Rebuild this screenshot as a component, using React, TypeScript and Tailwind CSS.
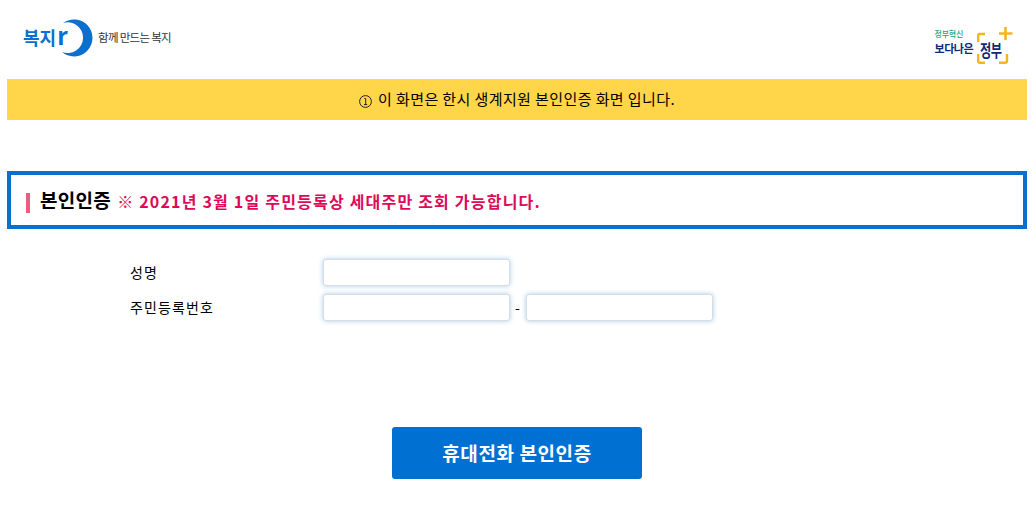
const krFont = "font-['Noto_Sans_CJK_KR',sans-serif]";

function Logo() {
	return (
		<div className="flex items-center h-[79px] pl-[23px] pb-[3px]">
			<div className="relative w-[71px] h-[38px]">
				<span className="absolute left-0 top-[3px] text-[18px] leading-[30px] font-bold text-[#0b6fd0] whitespace-nowrap">
					복지<span className="text-[24px] leading-[24px] ml-[1px]">r</span>
				</span>
				<svg className="absolute left-[33px] top-0" width="38" height="38" viewBox="0 0 38 38">
					<path d="M7 4 A18.5 18.5 0 1 1 6 33 A15.4 15.4 0 1 0 7 4 Z" fill="#0b6fd0" />
				</svg>
			</div>
			<span className="ml-[4px] text-[11.5px] tracking-[-0.7px] text-[#333]">
				함께 만드는 복지
			</span>
		</div>
	);
}

function GovLogo() {
	return (
		<div className="flex items-end h-[79px] pr-[20px] pb-[15px]">
			<div className="flex flex-col items-start mr-[4px] mb-[9px]">
				<span className="text-[8px] leading-[14px] font-medium tracking-[-0.2px] text-[#1fa37a]">
					정부혁신
				</span>
				<span className="text-[11px] leading-[14px] font-bold tracking-[-0.5px] text-[#0f2a78]">
					보다나은
				</span>
			</div>
			<div className="relative w-[37px] h-[37px]">
				<span className="absolute left-[-1px] top-[11px] text-[17px] leading-[24px] font-bold tracking-[-1px] text-[#0f2a78] scale-x-[0.72]">
					정부
				</span>
				<svg className="absolute left-0 top-0" width="37" height="37" viewBox="0 0 37 37" fill="none" stroke="#f6b51e" strokeWidth="2.4">
					<path d="M1.2 15 V8 Q1.2 7 2.2 7 H8" />
					<path d="M1.2 27 V34 Q1.2 35.8 3 35.8 H8" />
					<path d="M30 27 V34 Q30 35.8 28 35.8 H22" />
					<path d="M28.5 0 V13 M22 6.5 H35.5" strokeWidth="2.6" />
				</svg>
			</div>
		</div>
	);
}

function InfoIcon() {
	return (
		<svg className="mt-[3px]" width="13" height="13" viewBox="0 0 13 13" fill="none" stroke="#222" strokeWidth="1">
			<circle cx="6.5" cy="6.5" r="5.9" />
			<path d="M5.4 3.5 H6.7 V9.6 M5 9.6 H8.2" />
		</svg>
	);
}

const inputClass =
	"w-[187px] h-[27px] bg-white rounded-[3px] border border-[#dcdcdc] shadow-[0_0_5px_rgba(90,160,230,0.55)] outline-none";

export default function App() {
	return (
		<div className={`w-[1034px] h-[507px] bg-white text-black overflow-hidden ${krFont}`}>
			<header className="flex justify-between">
				<Logo />
				<GovLogo />
			</header>

			<div className="mx-[7px] h-[41px] bg-[#ffd54a] flex items-center justify-center gap-[6px] text-[15px] tracking-[0.4px]">
				<InfoIcon />
				<span>이 화면은 한시 생계지원 본인인증 화면 입니다.</span>
			</div>

			<div className="mx-[7px] mt-[51px] h-[58px] border-4 border-[#0b6fd0] flex items-center pl-[15px]">
				<span className="w-[4px] h-[20px] bg-[#e8607e] mr-[10px] mt-[6px]" />
				<span className="text-[19px] tracking-[0.3px] font-bold mr-[6px]">본인인증</span>
				<span className="text-[16px] font-bold text-[#dc0a5a] mt-[1px] tracking-[1.2px]">
					※ 2021년 3월 1일 주민등록상 세대주만 조회 가능합니다.
				</span>
			</div>

			<div className="mt-[30px] pl-[130px] flex flex-col gap-[8px] text-[14px] tracking-[1.1px]">
				<div className="flex items-center">
					<label className="w-[193px]">성명</label>
					<input className={inputClass} />
				</div>
				<div className="flex items-center">
					<label className="w-[193px]">주민등록번호</label>
					<input className={inputClass} />
					<span className="w-[16px] text-center text-[14px]">-</span>
					<input className={inputClass} />
				</div>
			</div>

			<div className="mt-[106px] flex justify-center">
				<button className="w-[250px] h-[52px] bg-[#0070d3] rounded-[3px] text-white text-[19px] tracking-[0.6px] font-bold">
					휴대전화 본인인증
				</button>
			</div>
		</div>
	);
}
